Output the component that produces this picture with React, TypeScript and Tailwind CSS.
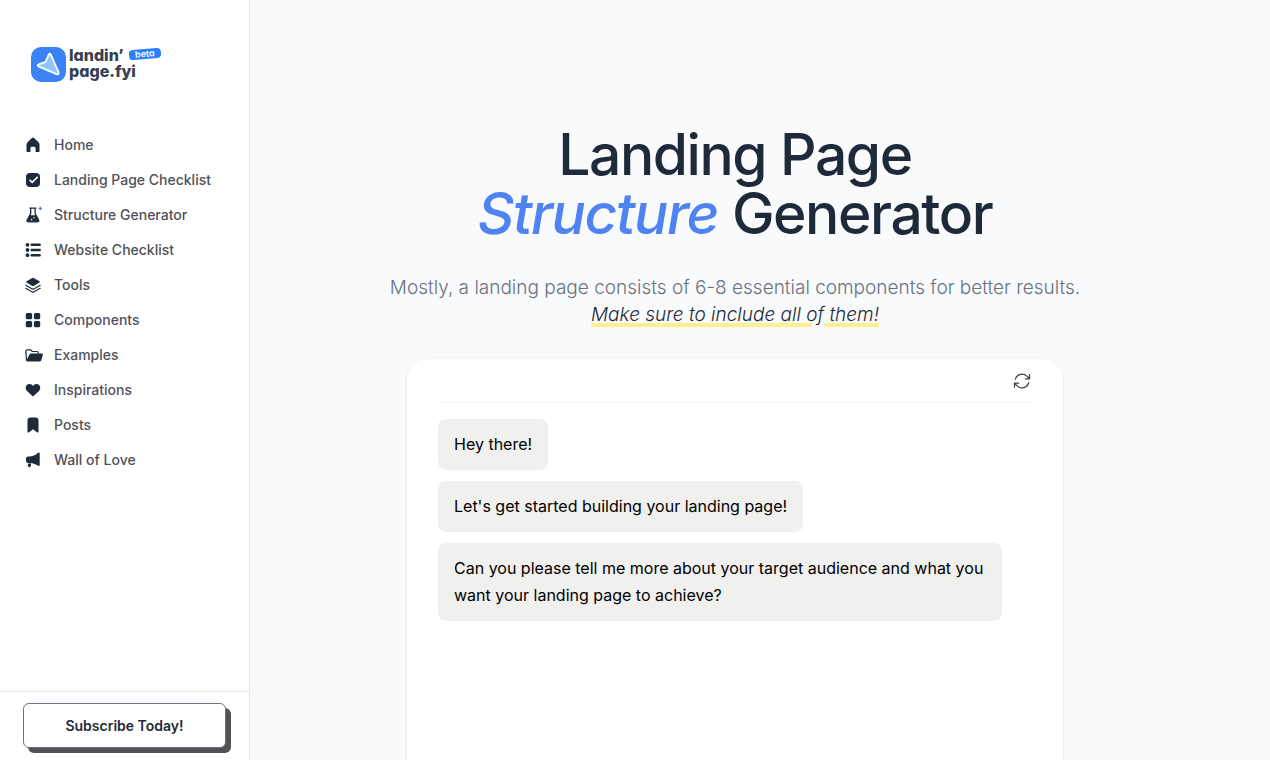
import type { ReactNode } from "react";

type NavItem = {
  label: string;
  icon: ReactNode;
};

// Sidebar links, every icon is drawn on a 20x20 grid
const navItems: NavItem[] = [
  {
    label: "Home",
    icon: <path d="M8.900 3a1.600 1.600 0 0 1 2.200 0l4.100 3.900c.8.800 1.300 1.800 1.300 3v6.200c0 .6-.4 1-1 1h-2.900v-3.700c0-1-.6-1.600-1.600-1.600H9c-1 0-1.600.6-1.600 1.600v3.700H4.500c-.6 0-1-.4-1-1V9.900c0-1.200.5-2.200 1.300-3z" />,
  },
  {
    label: "Landing Page Checklist",
    icon: (
      <>
        <rect x="3" y="3" width="14" height="14" rx="4" />
        <path d="m6.600 9.900 2.600 2.500 5.600-5.700" fill="none" stroke="white" strokeWidth="1.500" />
      </>
    ),
  },
  {
    label: "Structure Generator",
    icon: (
      <>
        <path d="M6.500 3.200h6.800M7.700 3.500v5l-3.500 6.600c-.5.900 0 1.700 1 1.700h9.400c1 0 1.500-.8 1-1.700l-3.500-6.600v-5" fill="none" stroke="currentColor" strokeWidth="1.300" />
        <path d="M6.700 10.200h6.500l3.200 6.500H3.500z" />
        <circle cx="8.600" cy="14.600" r=".8" fill="white" />
        <circle cx="11" cy="12.800" r=".7" fill="white" />
        <path d="m17.300 1.800.6 1.100 1.100.6-1.100.6-.6 1.100-.6-1.100-1.100-.6 1.100-.6z" fill="#3b6ef5" stroke="#3b6ef5" strokeWidth=".5" />
      </>
    ),
  },
  {
    label: "Website Checklist",
    icon: (
      <>
        <circle cx="4.500" cy="4.800" r="1.900" />
        <circle cx="4.500" cy="10" r="1.900" />
        <circle cx="4.500" cy="15.200" r="1.900" />
        <path d="M8.700 4.800h8M8.700 10h8M8.700 15.200h8" stroke="currentColor" strokeWidth="2.400" strokeLinecap="round" />
      </>
    ),
  },
  {
    label: "Tools",
    icon: (
      <>
        <path d="M9.300 2.900q.7-.3 1.400 0l5.700 3.300q1.200.7 0 1.400l-5.700 3.400q-.7.300-1.400 0L3.600 7.600q-1.200-.7 0-1.400z" />
        <path d="m2.800 10.300 6.500 3.600q.7.300 1.400 0l6.500-3.600M2.800 13.300l6.500 3.600q.7.300 1.400 0l6.500-3.600" fill="none" stroke="currentColor" strokeWidth="1.200" strokeLinecap="round" />
      </>
    ),
  },
  {
    label: "Components",
    icon: (
      <>
        <rect x="2.800" y="3" width="6.300" height="6.300" rx="1.500" />
        <rect x="10.900" y="3" width="6.300" height="6.300" rx="1.500" />
        <rect x="2.800" y="11" width="6.300" height="6.300" rx="1.500" />
        <rect x="10.900" y="11" width="6.300" height="6.300" rx="1.500" />
      </>
    ),
  },
  {
    label: "Examples",
    icon: (
      <>
        <path d="m3.600 15.600-.8-9q0-1.800 1.800-1.800h3l1.600 1.700h4.700q1.500 0 1.500 1.500v.7" fill="none" stroke="currentColor" strokeWidth="1.200" />
        <path d="M8.500 8.500h9.800c1.200 0 1.800.8 1.500 1.800l-1.500 4.700c-.3 1-1.100 1.600-2.200 1.600H4.500c-.9 0-1.300-.5-1-1.400l2.700-5.200c.5-1 1.200-1.500 2.300-1.500z" />
      </>
    ),
  },
  {
    label: "Inspirations",
    icon: <path d="M10 16.600 4 11C1.800 8.800 2.500 4 6.400 4 8.200 4 9.300 4.900 10 5.900 10.700 4.900 11.800 4 13.600 4c3.900 0 4.600 4.800 2.400 7z" />,
  },
  {
    label: "Posts",
    icon: <path d="M4.500 5.500q0-2.900 2.900-2.900h5.200q2.900 0 2.900 2.900v11c0 1-.8 1.400-1.600.8L10 14.300l-3.900 3c-.8.600-1.600.2-1.600-.8z" />,
  },
  {
    label: "Wall of Love",
    icon: (
      <>
        <path d="M15.200 2.700c.9-.5 1.500-.1 1.500.8v11.400c0 .9-.6 1.300-1.500.8-2.500-1.600-4.700-2.500-8.200-2.800H5.200A2.200 2.200 0 0 1 3 10.700V8.600c0-1.300.9-2.200 2.200-2.200H7c3.500-.3 5.700-1.600 8.200-3.700z" />
        <path d="M5 13.600h3.200l-.5 2.700q-.4 1.200-1.600 1-1.300-.3-1.300-1.500z" />
      </>
    ),
  },
];

const messages = [
  "Hey there!",
  "Let's get started building your landing page!",
  "Can you please tell me more about your target audience and what you want your landing page to achieve?",
];

function Logo() {
  return (
    <a href="#" className="flex items-start gap-[3px] text-gray-700">
      <svg width="35" height="35" viewBox="0 0 35 35" aria-hidden="true">
        <rect width="35" height="35" rx="10" fill="#3b82f6" />
        <path
          d="M17.800 7.300q1.200-1.600 2.100.5l7.600 17.200q.9 2.800-2 2.200L7.900 19.600q-2.400-1.200-.2-2.200l5.800-2.100q1-.4 1.500-1.300z"
          fill="#93c5fd"
          stroke="white"
          strokeWidth="1.800"
          strokeLinejoin="round"
        />
      </svg>
      <span className="relative text-base leading-4 font-extrabold [font-feature-settings:'cv11']">
        <span className="block">landin’</span>
        <span className="block">page.fyi</span>
        <span className="absolute top-[2px] left-[60px] -rotate-5 rounded-sm bg-blue-500 px-1.5 text-[9px] leading-[10px] font-semibold text-white">
          beta
        </span>
      </span>
    </a>
  );
}

function Sidebar() {
  return (
    <aside className="flex h-full w-[250px] shrink-0 flex-col border-r border-gray-200 bg-white">
      <div className="flex px-[31px] pt-[47px] pb-[45px]">
        <Logo />
      </div>
      <nav className="flex-1 px-[23px]">
        <ul>
          {navItems.map((item) => (
            <li key={item.label}>
              <a href="#" className="flex h-[35px] items-center gap-[11px] text-sm font-medium text-[#515257]">
                <svg className="size-5 text-gray-800" viewBox="0 0 20 20" fill="currentColor" aria-hidden="true">
                  {item.icon}
                </svg>
                {item.label}
              </a>
            </li>
          ))}
        </ul>
      </nav>
      <div className="border-t border-gray-200 px-[23px] pt-[11px] pb-3">
        <button className="h-[45px] w-full rounded-md border border-gray-500 bg-white text-sm font-semibold text-gray-800 shadow-[5px_5px_0_#525252]">
          Subscribe Today!
        </button>
      </div>
    </aside>
  );
}

export default function App() {
  return (
    <div className="flex h-screen overflow-hidden bg-[#f9fafc] font-['Inter',sans-serif]">
      <Sidebar />
      <main className="mr-[50px] flex min-w-0 flex-1 flex-col items-center overflow-hidden px-6 pt-[125px]">
        <h1 className="text-center text-[57px] leading-[59px] font-medium tracking-tight text-gray-800">
          Landing Page
          <br />
          <em className="text-[#4f83f1]">Structure</em> Generator
        </h1>
        <p className="mt-[31px] text-center text-[19px] leading-[27px] font-light text-gray-500">
          Mostly, a landing page consists of 6-8 essential components for better results.
          <br />
          <em className="text-gray-800 underline decoration-[#fdf090] decoration-4">Make sure to include all of them!</em>
        </p>

        {/* Chat card */}
        <section className="mt-[31px] min-h-[560px] w-full max-w-[656px] shrink-0 rounded-[20px] bg-white px-[31px] shadow-sm">
          <div className="flex h-11 items-center justify-end border-b border-gray-100">
            <button aria-label="Start over" className="text-[#444444]">
              <svg className="size-5" viewBox="0 0 24 24" fill="none" stroke="currentColor" strokeWidth="1.500" strokeLinecap="round" strokeLinejoin="round">
                <path d="M16.023 9.348h4.992V4.356M2.985 19.644v-4.992h4.992M2.985 14.652l3.181 3.183a8.250 8.250 0 0 0 13.803-3.700M4.031 9.865a8.250 8.250 0 0 1 13.803-3.700l3.181 3.183" />
              </svg>
            </button>
          </div>
          <div className="flex flex-col items-start gap-[11px] pt-4">
            {messages.map((message) => (
              <p key={message} className="max-w-[95%] rounded-lg bg-[#f0f0ee] px-4 py-3 text-base leading-[27px] text-black">
                {message}
              </p>
            ))}
          </div>
        </section>
      </main>
    </div>
  );
}
